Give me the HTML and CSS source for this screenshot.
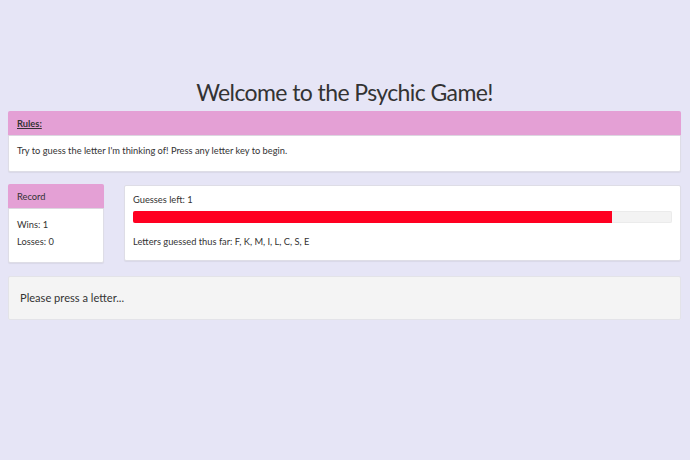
FILE: index.html
```html
<!DOCTYPE html>
<html>
<head>
<meta charset="utf-8">
<title>Psychic Game</title>
<link rel="stylesheet" href="styles.css">
</head>
<body>
<div class="page">
  <h1 class="title">Welcome to the Psychic Game!</h1>
  <div class="panel rules">
    <div class="panel-heading"><span class="rules-label">Rules:</span></div>
    <div class="panel-body rules-body">Try to guess the letter I'm thinking of! Press any letter key to begin.</div>
  </div>
  <div class="row">
    <div class="panel record">
      <div class="panel-heading">Record</div>
      <div class="panel-body record-body">
        <p class="line">Wins: 1</p>
        <p class="line">Losses: 0</p>
      </div>
    </div>
    <div class="panel status">
      <div class="panel-body status-body">
        <p class="line">Guesses left: 1</p>
        <div class="progress"><div class="progress-bar" style="width: 88.9%"></div></div>
        <p class="line">Letters guessed thus far: F, K, M, I, L, C, S, E</p>
      </div>
    </div>
  </div>
  <div class="well">Please press a letter...</div>
</div>
</body>
</html>
```
FILE: styles.css
```css
html, body {
  margin: 0;
  padding: 0;
}
body {
  background: #e6e5f6;
  font-family: "Lato", "Open Sans", sans-serif;
  color: #333;
  font-size: 9.3px;
  line-height: 13px;
}
.page {
  padding: 0 9px 0 8px;
}
.title {
  margin: 0;
  padding-top: 78px;
  height: 33px;
  font-size: 23px;
  line-height: 28px;
  font-weight: 400;
  letter-spacing: -0.6px;
  text-align: center;
  color: #333;
}
.panel {
  background: #fff;
  border: 1px solid #dedde6;
  border-radius: 2px;
  box-shadow: 0 1px 1px rgba(0,0,0,0.06);
}
.panel-heading {
  background: #e4a0d5;
  height: 23px;
  line-height: 23px;
  border-bottom: 1px solid #dcd6e0;
  border-radius: 2px 2px 0 0;
  margin: -1px -1px 0 -1px;
  padding: 0 8px 0 9px;
  padding-top: 1px;
}
.rules-label {
  font-weight: 700;
  text-decoration: underline;
}
.rules-body {
  padding: 8px 8px 14px;
}
.row {
  display: flex;
  gap: 20px;
  margin-top: 12px;
  align-items: flex-start;
}
.record {
  width: 94px;
}
.status {
  flex: 1;
  margin-top: 1px;
}
.line {
  margin: 0;
}
.record-body {
  padding: 9px 8px 14px;
}
.record-body .line + .line {
  margin-top: 4px;
}
.status-body {
  padding: 7px 8px 12px;
}
.progress {
  margin: 5px 0 12px;
  height: 12px;
  background: #f3f3f3;
  box-shadow: inset 0 0 0 1px #ebebeb;
  border-radius: 2px;
  overflow: hidden;
}
.progress-bar {
  height: 100%;
  background: #ff0021;
}
.well {
  margin-top: 13px;
  height: 42px;
  line-height: 42px;
  padding: 0 11px;
  background: #f4f4f4;
  border: 1px solid #e3e3e8;
  border-radius: 2px;
  font-size: 11.1px;
  color: #333;
}
```
